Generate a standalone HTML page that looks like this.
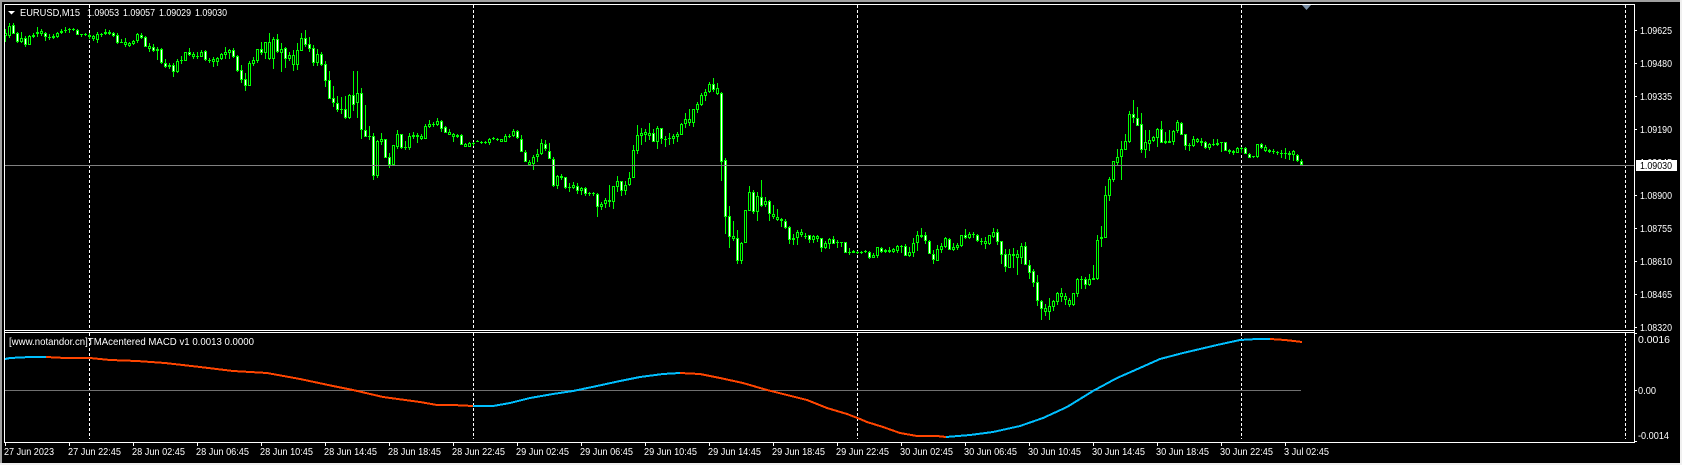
<!DOCTYPE html>
<html><head><meta charset="utf-8"><title>EURUSD,M15</title>
<style>
html,body{margin:0;padding:0;background:#000;width:1682px;height:465px;overflow:hidden}
svg{display:block;position:absolute;left:0;top:0}
text{font-family:"Liberation Sans",Arial,sans-serif;font-size:10.5px;fill:#fff}
</style></head><body>
<svg id="c" xmlns="http://www.w3.org/2000/svg" width="1682" height="465" viewBox="0 0 1682 465">
<rect width="1682" height="465" fill="#000"/>
<rect width="1682" height="2" fill="#a0a0a0"/>
<rect width="2" height="465" fill="#a0a0a0"/>
<rect y="463" width="1682" height="2" fill="#f0f0f0"/>
<rect x="1680" width="2" height="465" fill="#f0f0f0"/>
<g id="sep" stroke="#fff" stroke-width="1" stroke-dasharray="3 2" shape-rendering="crispEdges">
<path d="M89.5 5V329M473.5 5V329M857.5 5V329M1241.5 5V329M1625.5 5V329M89.5 333V439M473.5 333V439M857.5 333V439M1241.5 333V439M1625.5 333V439"/>
</g>
<g id="candles" shape-rendering="crispEdges"></g>
<path d="M5 165.5H1634" stroke="#808080" shape-rendering="crispEdges"/>
<path d="M5 390.5H1301" stroke="#707070" shape-rendering="crispEdges"/>
<g fill="none" stroke-width="2" shape-rendering="crispEdges" stroke-linejoin="round">
<polyline stroke="#00bfff" points="5,359 10,358 30,357 46,357"/>
<polyline stroke="#ff4500" points="46,357 65,358 90,358 110,360 137,361 165,363 200,367 233,371 267,373 300,379 333,386 353,390 383,397 420,402 437,405 453,405 473,406"/>
<polyline stroke="#00bfff" points="473,406 493,406 510,403 530,398 553,394 573,391 597,386 620,381 640,377 663,374 680,373"/>
<polyline stroke="#ff4500" points="680,373 700,374 720,378 743,383 767,390 787,395 807,400 827,408 847,414 860,419 867,422 883,427 900,433 917,436 937,436 946,437"/>
<polyline stroke="#00bfff" points="946,437 970,435 993,432 1020,426 1043,418 1067,407 1093,391 1117,378 1133,371 1160,359 1183,353 1217,345 1240,340 1257,339 1270,339"/>
<polyline stroke="#ff4500" points="1270,339 1285,340 1294,341 1302,342"/>
</g>
<path d="M1302 5h9l-4.500 5z" fill="#7a8fa6"/>
<g stroke="#fff" shape-rendering="crispEdges" fill="none">
<path d="M4.500 4.500H1634.500V442.500H4.500V4.500"/>
<path d="M4.500 330.500H1634.500M4.500 332.500H1634.500"/>
<path d="M1635 30.500h2M1635 63.500h2M1635 96.500h2M1635 129.500h2M1635 195.500h2M1635 228.500h2M1635 261.500h2M1635 294.500h2M1635 327.500h2M1635 333.500h2M1635 390.500h2M1635 441.500h2"/>
<path d="M5.500 443v3M69.500 443v3M133.500 443v3M197.500 443v3M261.500 443v3M325.500 443v3M389.500 443v3M453.500 443v3M517.500 443v3M581.500 443v3M645.500 443v3M709.500 443v3M773.500 443v3M837.500 443v3M901.500 443v3M965.500 443v3M1029.500 443v3M1093.500 443v3M1157.500 443v3M1221.500 443v3M1285.500 443v3"/>
</g>
<path d="M8 11h7l-3.500 3.500z" fill="#fff"/>
<text x="20" y="16" textLength="60" lengthAdjust="spacingAndGlyphs">EURUSD,M15</text>
<text x="87" y="16" textLength="32" lengthAdjust="spacingAndGlyphs">1.09053</text>
<text x="123" y="16" textLength="32" lengthAdjust="spacingAndGlyphs">1.09057</text>
<text x="159" y="16" textLength="32" lengthAdjust="spacingAndGlyphs">1.09029</text>
<text x="195" y="16" textLength="32" lengthAdjust="spacingAndGlyphs">1.09030</text>
<text x="9" y="345" textLength="245" lengthAdjust="spacingAndGlyphs">[www.notandor.cn]TMAcentered MACD v1 0.0013 0.0000</text>
<g>
<text x="1640" y="34" textLength="32" lengthAdjust="spacingAndGlyphs">1.09625</text>
<text x="1640" y="67" textLength="32" lengthAdjust="spacingAndGlyphs">1.09480</text>
<text x="1640" y="100" textLength="32" lengthAdjust="spacingAndGlyphs">1.09335</text>
<text x="1640" y="133" textLength="32" lengthAdjust="spacingAndGlyphs">1.09190</text>
<text x="1640" y="166" textLength="32" lengthAdjust="spacingAndGlyphs">1.09045</text>
<rect x="1636" y="160" width="41" height="11" fill="#fff"/>
<text x="1640" y="169" textLength="32" lengthAdjust="spacingAndGlyphs" style="fill:#000">1.09030</text>
<text x="1640" y="199" textLength="32" lengthAdjust="spacingAndGlyphs">1.08900</text>
<text x="1640" y="232" textLength="32" lengthAdjust="spacingAndGlyphs">1.08755</text>
<text x="1640" y="265" textLength="32" lengthAdjust="spacingAndGlyphs">1.08610</text>
<text x="1640" y="298" textLength="32" lengthAdjust="spacingAndGlyphs">1.08465</text>
<text x="1640" y="331" textLength="32" lengthAdjust="spacingAndGlyphs">1.08320</text>
<text x="1638" y="343" textLength="32" lengthAdjust="spacingAndGlyphs">0.0016</text>
<text x="1638" y="394" textLength="18" lengthAdjust="spacingAndGlyphs">0.00</text>
<text x="1638" y="439" textLength="31" lengthAdjust="spacingAndGlyphs">-0.0014</text>
</g>
<g>
<text x="4" y="455" textLength="50" lengthAdjust="spacingAndGlyphs">27 Jun 2023</text>
<text x="68" y="455" textLength="53" lengthAdjust="spacingAndGlyphs">27 Jun 22:45</text>
<text x="132" y="455" textLength="53" lengthAdjust="spacingAndGlyphs">28 Jun 02:45</text>
<text x="196" y="455" textLength="53" lengthAdjust="spacingAndGlyphs">28 Jun 06:45</text>
<text x="260" y="455" textLength="53" lengthAdjust="spacingAndGlyphs">28 Jun 10:45</text>
<text x="324" y="455" textLength="53" lengthAdjust="spacingAndGlyphs">28 Jun 14:45</text>
<text x="388" y="455" textLength="53" lengthAdjust="spacingAndGlyphs">28 Jun 18:45</text>
<text x="452" y="455" textLength="53" lengthAdjust="spacingAndGlyphs">28 Jun 22:45</text>
<text x="516" y="455" textLength="53" lengthAdjust="spacingAndGlyphs">29 Jun 02:45</text>
<text x="580" y="455" textLength="53" lengthAdjust="spacingAndGlyphs">29 Jun 06:45</text>
<text x="644" y="455" textLength="53" lengthAdjust="spacingAndGlyphs">29 Jun 10:45</text>
<text x="708" y="455" textLength="53" lengthAdjust="spacingAndGlyphs">29 Jun 14:45</text>
<text x="772" y="455" textLength="53" lengthAdjust="spacingAndGlyphs">29 Jun 18:45</text>
<text x="836" y="455" textLength="53" lengthAdjust="spacingAndGlyphs">29 Jun 22:45</text>
<text x="900" y="455" textLength="53" lengthAdjust="spacingAndGlyphs">30 Jun 02:45</text>
<text x="964" y="455" textLength="53" lengthAdjust="spacingAndGlyphs">30 Jun 06:45</text>
<text x="1028" y="455" textLength="53" lengthAdjust="spacingAndGlyphs">30 Jun 10:45</text>
<text x="1092" y="455" textLength="53" lengthAdjust="spacingAndGlyphs">30 Jun 14:45</text>
<text x="1156" y="455" textLength="53" lengthAdjust="spacingAndGlyphs">30 Jun 18:45</text>
<text x="1220" y="455" textLength="53" lengthAdjust="spacingAndGlyphs">30 Jun 22:45</text>
<text x="1284" y="455" textLength="45" lengthAdjust="spacingAndGlyphs">3 Jul 02:45</text>
</g>
</svg>
<script>
(function(){
var G='',K='',W='';
function add(x0,y0,s){
 s.split(';').forEach(function(e,i){
  e=e.trim(); if(!e)return;
  var p=e.split(' ');
  var x=x0+4*i,hi=Math.round(y0+p[0]/3),t=Math.round(y0+p[1]/3),b=Math.round(y0+p[2]/3),lo=Math.round(y0+p[3]/3);
  if(b<=t)b=t+1;
  if(lo<b)lo=b; if(hi>t)hi=t;
  G+='M'+x+' '+hi+'h1v'+(lo-hi)+'h-1zM'+(x-1)+' '+t+'h3v'+(b-t)+'h-3z';
  if(b-t>2){var r='M'+x+' '+(t+1)+'h1v'+(b-t-2)+'h-1z'; if(p[4]=='w')W+=r; else K+=r;}
 });
}
add(5,0,"88 100 108 125;70 78 108 115;70 76 102 102 w;95 100 125 130 w;97 115 125 130;108 115 135 142 w;105 108 134 134;100 105 110 113;80 95 103 110;88 94 102 108;97 100 112 122 w;102 110 112 120;102 108 113 118;95 100 110 113;88 93 100 103;80 90 93 98;83 88 90 98;85 88 91 93;88 91 104 105 w;103 103 104 110;98 103 105 108;100 106 112 118;106 108 116 122;95 102 120 130;100 103 106 110;88 96 103 105;90 95 102 104;95 99 107 112 w;100 105 128 132 w;118 125 127 130;115 126 136 140;125 130 137 142;120 123 132 135;98 102 124 128;98 104 114 118 w;108 110 142 142 w;130 137 147 155;132 142 154 155 w;140 148 154 180;145 148 188 192 w;178 188 200 205 w;190 196 202 208;190 196 216 230 w;178 182 216 218;168 180 183 192;155 157 183 184;145 157 165 168 w;155 163 170 178;155 168 172 178;150 155 172 172;150 154 180 183 w;175 180 182 188;172 178 186 200;172 175 186 198;158 163 177 180;142 157 165 177;148 151 158 176;145 150 170 173 w;165 168 214 216 w;195 211 240 248 w;220 238 258 272 w;184 190 258 258;170 181 192 198;148 148 182 190;127 148 158 165 w;125 127 160 178;98 125 178 180;112 118 176 208;102 118 156 160 w;128 148 158 215;140 145 176 205 w;155 166 176 182;150 165 194 212;128 150 194 210;100 115 152 152;90 115 135 140 w");
add(301,20,"42 55 92 93;30 55 75 80 w;50 72 87 95 w;75 85 128 138 w;88 103 128 138;97 103 135 138 w;123 132 182 200 w;153 180 236 236 w;198 235 250 262 w;228 250 270 275 w;232 267 269 282;228 267 293 298 w;222 226 293 296;153 226 255 272 w;153 220 250 293;205 220 330 356 w;255 330 350 352 w;318 348 351 360;340 348 468 480 w;360 363 468 474;340 358 366 375;357 357 413 414 w;398 412 435 444 w;375 375 435 435;330 343 380 386;343 343 383 386 w;362 380 383 390;340 348 383 390;335 346 350 357;340 345 350 370");
add(421,60,"222 228 236 240;193 198 236 236;180 193 202 205;185 191 195 200;175 183 195 198;180 184 206 215 w;198 202 218 220 w;208 217 224 226;218 223 231 246;222 226 232 235;222 226 254 256 w;250 253 260 262;245 250 260 262;246 248 251 258;240 243 244 247;243 245 250 252;243 246 250 252;233 238 248 255;232 235 238 241;234 236 240 243;236 238 245 247;222 229 245 246;222 228 229 234;208 214 228 231;210 214 233 237 w;226 236 275 276 w;270 275 305 306 w;300 305 315 316;285 292 312 330;268 283 290 306;237 250 282 285;240 253 268 272 w;250 272 296 297 w;292 296 378 381 w;345 349 378 387;342 349 354 360;350 352 383 386 w;370 381 382 395;365 376 384 388;370 377 392 402 w;382 385 392 405;380 385 401 408 w;395 400 401 408;395 400 403 407;398 403 440 472 w;426 433 440 450;415 421 433 445;375 421 425 440;378 379 425 447;348 364 380 395;362 364 392 408 w;362 374 392 405;336 355 374 378;255 271 353 353;195 226 272 282;205 220 227 255;208 217 225 246;190 220 227 240;208 218 245 247 w;198 205 245 266;205 205 238 252 w;228 237 238 260;220 235 238 254;222 229 236 252;217 223 231 245;188 191 224 226;160 178 191 205;148 178 188 198;148 148 188 201;127 133 149 160;100 105 135 137;88 97 107 122;67 72 97 100;55 72 90 96 w;70 85 101 105;97 100 305 362 w;295 301 470 522 w;438 467 530 565 w;483 527 537 542;510 535 602 612 w;545 550 602 612;450 451 550 550;378 397 452 452;390 397 455 462 w;395 408 455 483;360 412 437 440 w;410 424 436 442;420 424 463 483 w;435 463 472 476;447 472 480 483;473 477 483 501;478 484 503 507 w;497 501 539 552 w;522 535 539 555;510 517 533 555;507 517 526 530;518 527 528 538;525 526 539 550 w;525 528 540 550;525 529 536 545;533 535 563 576 w;543 550 563 568;535 538 552 567;528 538 552 553 w;540 546 549 565");
add(841,100,"427 427 430 440;425 427 458 458 w;443 456 458 465;450 453 458 460;453 455 458 463;453 456 458 461;450 453 457 459;453 455 473 476 w;460 466 473 474;441 442 468 474;441 443 456 458 w;447 450 456 459;442 450 456 459;445 448 455 458;436 439 453 458;435 438 439 460;432 438 467 469 w;442 457 467 472;415 430 458 472;393 406 430 452;385 406 411 413 w;396 404 423 432 w;420 424 461 463 w;450 462 480 492 w;435 447 482 483;430 438 450 458;410 414 442 445;414 417 449 451 w;430 441 449 453;428 436 443 450;404 405 437 440;388 406 415 418 w;397 402 413 416;395 403 406 415;403 406 424 427 w;415 424 426 435;412 424 431 447;405 406 432 435;384 397 411 414;388 397 425 435 w;423 424 465 492 w;447 462 501 516 w;447 462 503 503;445 462 468 505;450 462 473 525;430 438 473 492;426 438 494 495 w;480 496 518 537 w;508 514 548 560 w;525 547 604 618 w;600 604 626 660 w;612 625 635 648;595 618 635 660;600 604 620 632;575 579 605 614;565 580 590 605;580 589 601 614;595 600 614 621;578 580 614 617;535 538 582 590;528 538 540 568;532 538 554 567 w;522 538 554 558;495 535 539 540;405 421 537 540;378 412 418 440;258 286 413 413;232 238 288 303;182 184 239 246;147 172 188 196;123 148 172 240;103 124 149 150;33 42 126 128;0 43 55 68 w;22 55 77 78 w;40 72 150 160 w;90 127 150 174;90 121 131 153;108 112 122 125;85 87 113 140;63 88 128 129 w;95 124 129 132;90 124 128 130;90 94 125 135;60 67 93 100;66 69 104 105 w;103 103 137 150 w;130 134 136 153;108 118 137 140;113 118 126 130;114 124 128 137;124 127 143 147 w;128 132 144 150;117 131 134 137;117 129 134 137;126 126 129 155;125 127 152 153 w;147 150 155 162;150 153 158 165;141 143 158 158;140 143 147 158;140 143 161 163 w;158 161 173 174 w;167 169 171 174;132 133 171 173");
add(1261,120,"68 72 83 86 w;76 82 92 97;88 91 95 99;88 93 94 102;92 96 100 105;90 100 101 114;84 98 103 116;92 98 104 120;90 94 104 122;102 105 122 125 w;118 122 135 136 w");
document.getElementById('candles').innerHTML='<path fill="#00ff00" d="'+G+'"/><path fill="#000" d="'+K+'"/><path fill="#fff" d="'+W+'"/>';
})();
</script>
</body></html>
